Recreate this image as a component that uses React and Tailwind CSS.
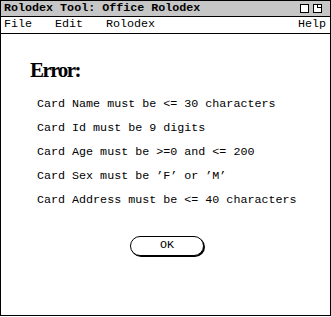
export default function App() {
  const mono = { fontFamily: '"Liberation Mono", "Courier New", monospace' };
  const lines = [
    "Card Name must be <= 30 characters",
    "Card Id must be 9 digits",
    "Card Age must be >=0 and <= 200",
    "Card Sex must be \u2019F\u2019 or \u2019M\u2019",
    "Card Address must be <= 40 characters",
  ];
  return (
    <div className="w-[331px] h-[317px] bg-white">
      <div className="w-[331px] h-[316px] border border-black flex flex-col">
        <div className="h-[16px] bg-[#c6c6c6] border-b border-black flex items-center justify-between pl-[3px] pr-[8px]">
          <span className="text-[11.7px] font-bold text-black leading-none whitespace-pre" style={mono}>Rolodex Tool: Office Rolodex</span>
          <div className="flex items-center gap-[4px]">
            <div className="w-[9px] h-[9px] border border-black bg-white"></div>
            <div className="w-[9px] h-[9px] border border-black bg-white relative">
              <div className="absolute left-[3px] top-[-1px] w-[5px] h-[4px] border border-black bg-white"></div>
            </div>
          </div>
        </div>
        <div className="h-[17px] border-b border-black flex items-center justify-between pl-[3px] pr-[4px] text-[11.7px] text-black leading-none" style={mono}>
          <div className="flex">
            <span className="w-[51px]">File</span>
            <span className="w-[51px]">Edit</span>
            <span>Rolodex</span>
          </div>
          <span>Help</span>
        </div>
        <div className="flex flex-col flex-1">
          <div className="pl-[29px] pt-[26px] text-[21px] font-bold leading-[20px] tracking-[-1.5px] text-black" style={{ fontFamily: '"Liberation Serif", "Times New Roman", serif' }}>
            Error:
          </div>
          <div className="flex flex-col pl-[36px] pt-[17px] gap-[10px]">
            {lines.map((l) => (
              <div key={l} className="h-[14px] text-[11.7px] leading-[14px] text-black whitespace-pre" style={mono}>{l}</div>
            ))}
          </div>
          <div className="flex justify-center pt-[29px] pl-[3px]">
            <button className="w-[74px] h-[20px] rounded-full border border-black bg-white shadow-[1px_1px_0_#000] text-[11.7px] text-black leading-none flex items-center justify-center" style={mono}>
              OK
            </button>
          </div>
        </div>
      </div>
    </div>
  );
}
